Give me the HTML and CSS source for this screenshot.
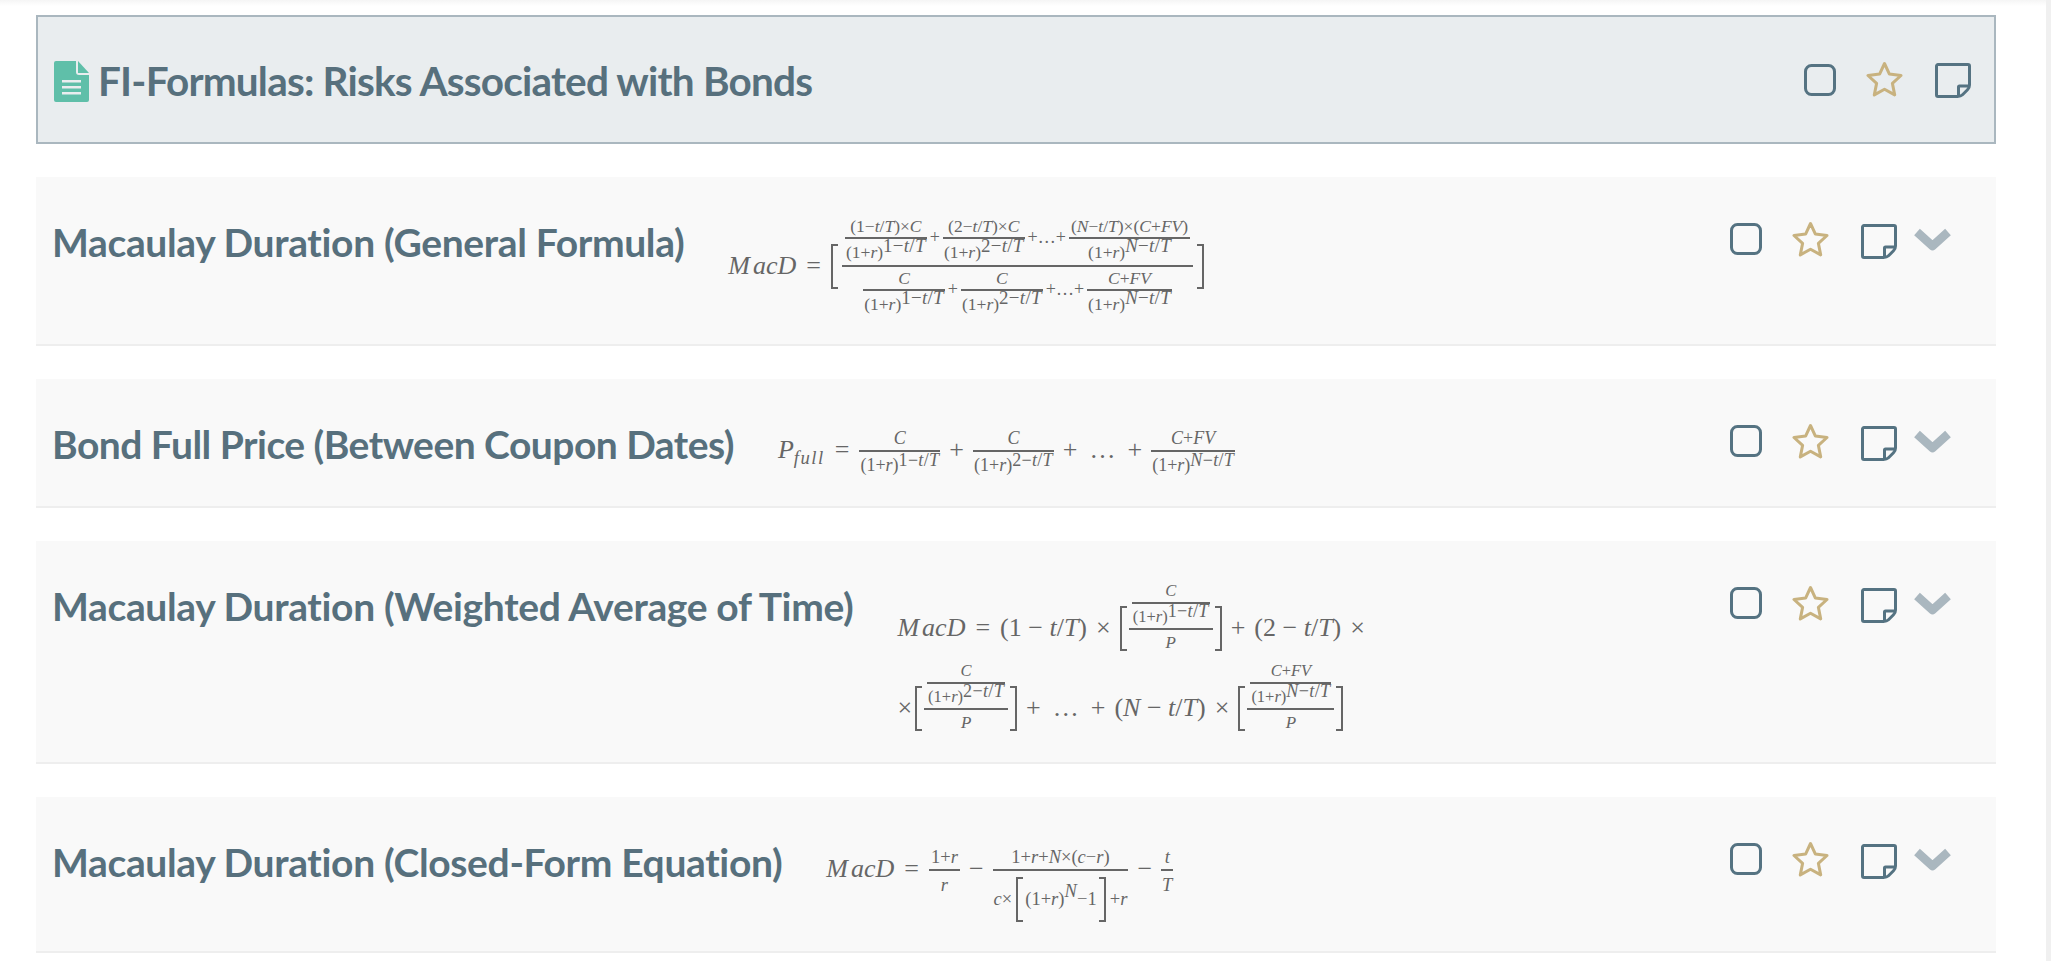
FILE: index.html
```html
<!DOCTYPE html>
<html lang="en">
<head>
<meta charset="utf-8">
<title>FI-Formulas: Risks Associated with Bonds</title>
<link rel="stylesheet" href="styles.css">
</head>
<body>
<svg class="defs" width="0" height="0" aria-hidden="true">
  <symbol id="box" viewBox="0 0 32 32"><rect x="1.500" y="1.500" width="29" height="29" rx="6" fill="none" stroke="currentColor" stroke-width="3"/></symbol>
  <symbol id="star" viewBox="0 0 37 36"><path d="M18.500 2.500l4.900 10.600 11.600 1.400-8.600 7.900 2.300 11.500-10.200-5.700-10.200 5.700 2.300-11.500L2 14.500l11.600-1.400z" fill="none" stroke="currentColor" stroke-width="3" stroke-linejoin="round"/></symbol>
  <symbol id="note" viewBox="0 0 36 35"><path d="M22.500 33.500H3a1.500 1.500 0 0 1-1.500-1.500V3A1.500 1.500 0 0 1 3 1.500h30A1.500 1.500 0 0 1 34.500 3v19c0 2-.7 3.500-2 4.800l-5 5c-1.300 1.300-3 1.700-5 1.700z" fill="none" stroke="currentColor" stroke-width="3"/><path d="M23.500 33v-9a1 1 0 0 1 1-1h9.500" fill="none" stroke="currentColor" stroke-width="3"/></symbol>
  <symbol id="chev" viewBox="0 0 37 24"><path d="M3 4l15.500 14L34 4" fill="none" stroke="currentColor" stroke-width="8.500" stroke-linejoin="round"/></symbol>
</svg>
<div class="page">
  <main class="main">
    <header class="head">
      <svg class="doc" viewBox="0 0 35 41" aria-hidden="true"><path d="M2 0h20v11a3 3 0 0 0 3 3h10v25a2 2 0 0 1-2 2H2a2 2 0 0 1-2-2V2a2 2 0 0 1 2-2z" fill="#5fbfa9"/><path d="M24 0l11 12H24z" fill="#5fbfa9"/><path d="M8 19h19v2.500H8zM8 25h19v2.500H8zM8 31h19v2.500H8z" fill="#e9edef"/></svg>
      <h1 class="title title-head">FI-Formulas: Risks Associated with Bonds</h1>
      <div class="actions actions-head">
        <svg class="i-box"><use href="#box"/></svg>
        <svg class="i-star"><use href="#star"/></svg>
        <svg class="i-note"><use href="#note"/></svg>
      </div>
    </header>

    <section class="row row-a">
      <h2 class="title">Macaulay Duration (General Formula)</h2>
      <div class="formula fa">
        <div class="line">
          <span class="var">M</span><i>acD</i><span class="rel">=</span>
          <span class="br l tall-a"></span>
          <span class="f outer">
            <span class="n"><span class="line small">
              <span class="f"><span class="n">(1−<i>t</i>/<i>T</i>)×<i>C</i></span><span class="d">(1+<i>r</i>)<sup>1−<i>t</i>/<i>T</i></sup></span></span>
              <span class="p">+</span>
              <span class="f"><span class="n">(2−<i>t</i>/<i>T</i>)×<i>C</i></span><span class="d">(1+<i>r</i>)<sup>2−<i>t</i>/<i>T</i></sup></span></span>
              <span class="p">+…+</span>
              <span class="f"><span class="n">(<i>N</i>−<i>t</i>/<i>T</i>)×(<i>C</i>+<i>FV</i>)</span><span class="d">(1+<i>r</i>)<sup><i>N</i>−<i>t</i>/<i>T</i></sup></span></span>
            </span></span>
            <span class="d"><span class="line small">
              <span class="f"><span class="n"><i>C</i></span><span class="d">(1+<i>r</i>)<sup>1−<i>t</i>/<i>T</i></sup></span></span>
              <span class="p">+</span>
              <span class="f"><span class="n"><i>C</i></span><span class="d">(1+<i>r</i>)<sup>2−<i>t</i>/<i>T</i></sup></span></span>
              <span class="p">+…+</span>
              <span class="f"><span class="n"><i>C</i>+<i>FV</i></span><span class="d">(1+<i>r</i>)<sup><i>N</i>−<i>t</i>/<i>T</i></sup></span></span>
            </span></span>
          </span>
          <span class="br r tall-a"></span>
        </div>
      </div>
      <div class="actions">
        <svg class="i-box"><use href="#box"/></svg>
        <svg class="i-star"><use href="#star"/></svg>
        <svg class="i-note"><use href="#note"/></svg>
        <svg class="i-chev"><use href="#chev"/></svg>
      </div>
    </section>

    <section class="row row-b">
      <h2 class="title">Bond Full Price (Between Coupon Dates)</h2>
      <div class="formula fb">
        <div class="line">
          <i class="pf">P<sub>full</sub></i><span class="rel">=</span>
          <span class="f mid"><span class="n"><i>C</i></span><span class="d">(1+<i>r</i>)<sup>1−<i>t</i>/<i>T</i></sup></span></span>
          <span class="op">+</span>
          <span class="f mid"><span class="n"><i>C</i></span><span class="d">(1+<i>r</i>)<sup>2−<i>t</i>/<i>T</i></sup></span></span>
          <span class="op">+</span><span class="dots">…</span><span class="op">+</span>
          <span class="f mid"><span class="n"><i>C</i>+<i>FV</i></span><span class="d">(1+<i>r</i>)<sup><i>N</i>−<i>t</i>/<i>T</i></sup></span></span>
        </div>
      </div>
      <div class="actions">
        <svg class="i-box"><use href="#box"/></svg>
        <svg class="i-star"><use href="#star"/></svg>
        <svg class="i-note"><use href="#note"/></svg>
        <svg class="i-chev"><use href="#chev"/></svg>
      </div>
    </section>

    <section class="row row-c">
      <h2 class="title">Macaulay Duration (Weighted Average of Time)</h2>
      <div class="formula fc">
        <div class="line line-c">
          <span class="var">M</span><i>acD</i><span class="rel">=</span>
          <span class="t">(1 − <i>t</i>/<i>T</i>)</span><span class="op">×</span>
          <span class="br l tall-c"></span>
          <span class="f stack"><span class="n"><span class="f in"><span class="n"><i>C</i></span><span class="d">(1+<i>r</i>)<sup>1−<i>t</i>/<i>T</i></sup></span></span></span><span class="d"><i>P</i></span></span>
          <span class="br r tall-c"></span>
          <span class="op">+</span><span class="t">(2 − <i>t</i>/<i>T</i>)</span><span class="op">×</span>
        </div>
        <div class="line line-c">
          <span class="op first">×</span>
          <span class="br l tall-c"></span>
          <span class="f stack"><span class="n"><span class="f in"><span class="n"><i>C</i></span><span class="d">(1+<i>r</i>)<sup>2−<i>t</i>/<i>T</i></sup></span></span></span><span class="d"><i>P</i></span></span>
          <span class="br r tall-c"></span>
          <span class="op">+</span><span class="dots">…</span><span class="op">+</span><span class="t">(<i>N</i> − <i>t</i>/<i>T</i>)</span><span class="op">×</span>
          <span class="br l tall-c"></span>
          <span class="f stack"><span class="n"><span class="f in"><span class="n"><i>C</i>+<i>FV</i></span><span class="d">(1+<i>r</i>)<sup><i>N</i>−<i>t</i>/<i>T</i></sup></span></span></span><span class="d"><i>P</i></span></span>
          <span class="br r tall-c"></span>
        </div>
      </div>
      <div class="actions">
        <svg class="i-box"><use href="#box"/></svg>
        <svg class="i-star"><use href="#star"/></svg>
        <svg class="i-note"><use href="#note"/></svg>
        <svg class="i-chev"><use href="#chev"/></svg>
      </div>
    </section>

    <section class="row row-d">
      <h2 class="title">Macaulay Duration (Closed-Form Equation)</h2>
      <div class="formula fd">
        <div class="line">
          <span class="var">M</span><i>acD</i><span class="rel">=</span>
          <span class="f mid"><span class="n">1+<i>r</i></span><span class="d"><i>r</i></span></span>
          <span class="op">−</span>
          <span class="f mid"><span class="n">1+<i>r</i>+<i>N</i>×(<i>c</i>−<i>r</i>)</span><span class="d"><span class="line dline"><span><i>c</i>×</span><span class="br l tall-d"></span><span>(1+<i>r</i>)<sup><i>N</i></sup>−1</span><span class="br r tall-d"></span><span>+<i>r</i></span></span></span></span>
          <span class="op">−</span>
          <span class="f mid"><span class="n"><i>t</i></span><span class="d"><i>T</i></span></span>
        </div>
      </div>
      <div class="actions">
        <svg class="i-box"><use href="#box"/></svg>
        <svg class="i-star"><use href="#star"/></svg>
        <svg class="i-note"><use href="#note"/></svg>
        <svg class="i-chev"><use href="#chev"/></svg>
      </div>
    </section>
  </main>
  <div class="scrollbar"></div>
</div>
</body>
</html>
```
FILE: styles.css
```css
* { box-sizing: border-box; }
html, body { margin: 0; height: 100%; overflow: hidden; background: #fff; }
.defs { position: absolute; }
.page { display: flex; height: 961px; background: linear-gradient(#f5f5f5, #fff 6px); }
.main { width: 2046px; padding: 15px 50px 0 36px; }
.scrollbar { width: 5px; background: #f0f0f0; }

.title {
  margin: 0;
  font-family: Lato, sans-serif;
  font-weight: 700;
  font-size: 39px;
  line-height: 48px;
  letter-spacing: -.35px;
  color: #57707d;
  white-space: nowrap;
}
.title-head { font-size: 40.500px; padding-top: 3px; letter-spacing: -.8px; }
.row-b .title { letter-spacing: -.53px; }
.head {
  display: flex;
  align-items: center;
  height: 129px;
  padding: 0 23px 0 16px;
  background: #e9edef;
  border: 2px solid #aab7bf;
  margin-bottom: 33px;
}
.doc { width: 35px; height: 41px; margin: 3px 9px 0 0; flex: none; }

.row {
  display: flex;
  align-items: flex-start;
  padding: 41px 45px 0 16px;
  background: #f9f9f9;
  border-bottom: 2px solid #eee;
  margin-bottom: 33px;
}
.row-a { height: 169px; }
.row-b { height: 129px; }
.row-c { height: 223px; }
.row-d { height: 156px; }

.actions { display: flex; align-items: flex-start; margin-left: auto; margin-top: 5px; color: #557382; }
.actions-head { align-items: center; margin-top: 0; }
.i-box { width: 32px; height: 32px; margin-right: 30px; }
.i-star { width: 37px; height: 36px; margin-top: -2px; margin-right: 32px; color: #c8b27f; }
.i-note { width: 36px; height: 35px; margin-top: 1px; margin-right: 17px; }
.actions-head .i-note { margin-right: 0; }
.i-chev { width: 37px; height: 24px; margin-top: 5px; color: #aab7bf; }

.formula {
  margin-left: 44px;
  font-family: "Liberation Serif", serif;
  font-size: 26px;
  color: #666;
  white-space: nowrap;
}
.fa { margin-top: -3px; }
.fb { margin-top: 4px; }
.fc { margin-top: 6px; }
.fd { margin-top: -22px; }

.line { display: flex; align-items: center; }
.var { font-style: italic; margin-right: 3px; }
.rel { margin: 0 10px; }
.f { display: inline-grid; grid-template-rows: 1fr 1fr; justify-items: center; }
.f > .n { align-self: end; display: block; line-height: 1.15; padding: 0 2px 1px; }
.f > .d { display: block; width: 100%; text-align: center; border-top: 2px solid #666; line-height: 1.2; padding: 3px 1px 0; }
sup { font-size: 1em; line-height: 0; vertical-align: 0.3em; letter-spacing: .3px; }
sub { font-size: .72em; line-height: 0; vertical-align: -0.3em; letter-spacing: 1.500px; }

.outer { margin: 0 2px; grid-template-rows: 50px 52px; }
.outer > .n { padding: 0 3px; align-self: start; }
.outer > .d { padding: 0 3px; }
.small { font-size: 18px; justify-content: center; align-items: flex-start; }
.small .p { margin: 11px 3px 0; line-height: 22px; }
.small .f { font-size: 17.500px; grid-template-rows: 22px 28px; }
.small sup { font-size: 1.08em; }

.mid { font-size: 18px; grid-template-rows: 26px 26px; }
.fd .mid { grid-template-rows: 1fr 1fr; font-size: 18.500px; }
.op { margin: 0 9px; }
.op.first { margin: 0 3px 0 0; }
.dots { margin: 0 3px; }
.t { white-space: pre; }
.br { display: inline-block; width: 7px; border: 2px solid #666; flex: none; }
.br.l { border-right: 0; margin-right: 2px; }
.br.r { border-left: 0; margin-left: 2px; }
.tall-a { height: 45px; }
.tall-c { height: 45px; }
.tall-d { height: 45px; margin: 0 4px; }

.line-c { height: 80px; }
.stack { font-size: 17px; grid-template-rows: 43px 43px; }
.stack > .n { padding: 0 3px; align-self: end; }
.stack .in { font-size: 16.500px; grid-template-rows: 17px 26px; }
.stack .in sup { font-size: 1.1em; }
.dline { justify-content: center; margin: 3px 0 0; }
.dline sup { vertical-align: .45em; }
```
